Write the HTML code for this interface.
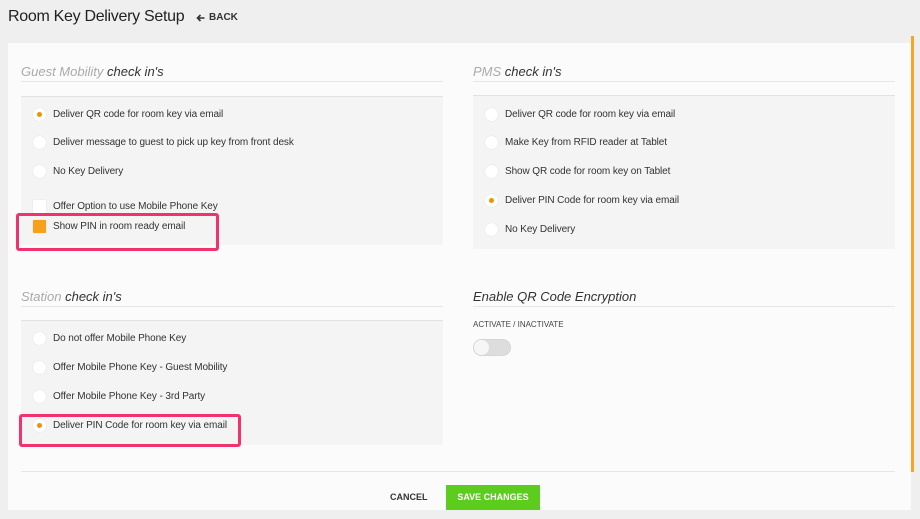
<!DOCTYPE html>
<html><head><style>
*{margin:0;padding:0;box-sizing:border-box}
body{width:920px;height:519px;background:#efefef;font-family:"Liberation Sans",sans-serif;position:relative;overflow:hidden;color:#333}
.a{position:absolute}
.title{left:8px;top:8px;font-size:16px;color:#222;letter-spacing:-0.3px}
.back{left:209px;top:12px;font-size:10px;font-weight:bold;color:#333;white-space:nowrap}
.panel{left:8px;top:43px;width:903px;height:467px;background:#fbfbfb}
.sb{left:911px;top:36px;width:3px;height:436px;background:#f5a623}
.h{font-size:13px;font-style:italic;color:#333}
.h span{color:#aaa}
.line{height:1px;background:#e6e6e6}
.box{background:#f4f4f4;border-top:1px solid #e2e2e2}
.r{position:absolute;font-size:10px;color:#333;white-space:nowrap;letter-spacing:-0.1px}
.r i{position:absolute;left:-20px;top:-1px;width:13px;height:13px;border-radius:50%;background:#fff;box-shadow:0 0 1px #ccc}
.r i.on:after{content:"";position:absolute;left:4px;top:4px;width:5px;height:5px;border-radius:50%;background:#f39200}
.r i.sq{border-radius:1px}
.r i.sqon{border-radius:1px;background:#f7a01c}
.hl{border:3px solid #f2326c;border-radius:3px}
</style></head><body>
<div class="a title">Room Key Delivery Setup</div>
<svg class="a" style="left:196px;top:14px" width="9" height="8" viewBox="0 0 9 8"><path d="M8.5 4H2M4.5 1L1.5 4L4.5 7" stroke="#333" stroke-width="1.6" fill="none"/></svg>
<div class="a back">BACK</div>
<div class="a panel"></div>
<div class="a sb"></div>

<div class="a h" style="left:21px;top:64px"><span>Guest Mobility</span> check in's</div>
<div class="a line" style="left:21px;top:81px;width:422px"></div>
<div class="a box" style="left:21px;top:96px;width:422px;height:149px"></div>
<div class="r" style="left:53px;top:109px"><i class="on"></i>Deliver QR code for room key via email</div>
<div class="r" style="left:53px;top:137px"><i></i>Deliver message to guest to pick up key from front desk</div>
<div class="r" style="left:53px;top:166px"><i></i>No Key Delivery</div>
<div class="r" style="left:53px;top:201px"><i class="sq"></i>Offer Option to use Mobile Phone Key</div>
<div class="r" style="left:53px;top:221px"><i class="sqon"></i>Show PIN in room ready email</div>
<div class="a hl" style="left:16px;top:213px;width:203px;height:38px"></div>

<div class="a h" style="left:473px;top:64px"><span>PMS</span> check in's</div>
<div class="a line" style="left:473px;top:81px;width:422px"></div>
<div class="a box" style="left:473px;top:95px;width:422px;height:154px"></div>
<div class="r" style="left:505px;top:109px"><i></i>Deliver QR code for room key via email</div>
<div class="r" style="left:505px;top:137px"><i></i>Make Key from RFID reader at Tablet</div>
<div class="r" style="left:505px;top:166px"><i></i>Show QR code for room key on Tablet</div>
<div class="r" style="left:505px;top:195px"><i class="on"></i>Deliver PIN Code for room key via email</div>
<div class="r" style="left:505px;top:224px"><i></i>No Key Delivery</div>

<div class="a h" style="left:21px;top:289px"><span>Station</span> check in's</div>
<div class="a line" style="left:21px;top:306px;width:422px"></div>
<div class="a box" style="left:21px;top:320px;width:422px;height:125px"></div>
<div class="r" style="left:53px;top:333px"><i></i>Do not offer Mobile Phone Key</div>
<div class="r" style="left:53px;top:362px"><i></i>Offer Mobile Phone Key - Guest Mobility</div>
<div class="r" style="left:53px;top:391px"><i></i>Offer Mobile Phone Key - 3rd Party</div>
<div class="r" style="left:53px;top:420px"><i class="on"></i>Deliver PIN Code for room key via email</div>
<div class="a hl" style="left:19px;top:414px;width:222px;height:33px"></div>

<div class="a h" style="left:473px;top:289px;color:#333">Enable QR Code Encryption</div>
<div class="a line" style="left:473px;top:306px;width:422px"></div>
<div class="a" style="left:473px;top:320px;font-size:8px;color:#444">ACTIVATE / INACTIVATE</div>
<div class="a" style="left:473px;top:339px;width:38px;height:17px;border-radius:9px;background:#ddd;border:1px solid #d6d6d6"></div>
<div class="a" style="left:474px;top:340px;width:15px;height:15px;border-radius:50%;background:#f6f6f6"></div>

<div class="a line" style="left:21px;top:471px;width:874px"></div>
<div class="a" style="left:390px;top:492px;font-size:9px;font-weight:bold;color:#333">CANCEL</div>
<div class="a" style="left:446px;top:485px;width:94px;height:25px;background:#5ccc1f;color:#fff;font-size:9px;font-weight:bold;text-align:center;line-height:25px">SAVE CHANGES</div>
</body></html>
